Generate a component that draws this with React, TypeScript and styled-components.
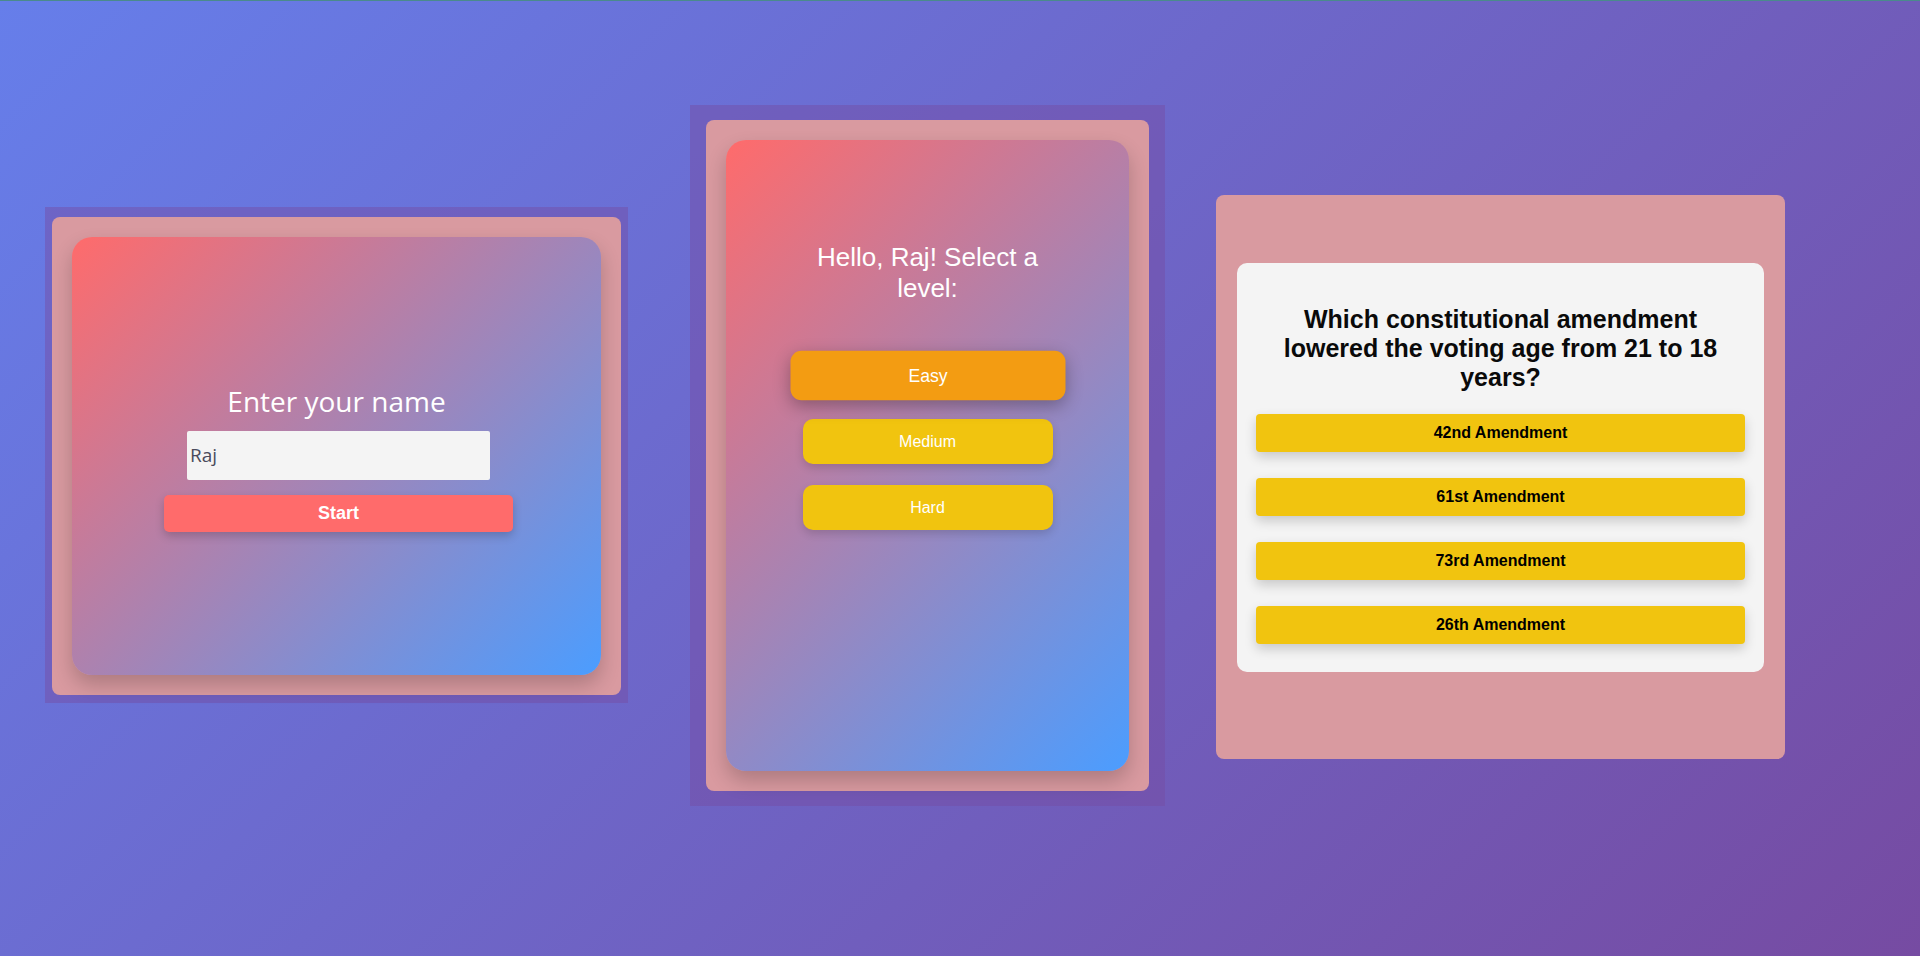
import React from "react";
import styled, { createGlobalStyle } from "styled-components";

const GlobalStyle = createGlobalStyle`
  html, body { margin: 0; padding: 0; }
  body { font-family: "Liberation Sans", Arial, sans-serif; }
  *, *::before, *::after { box-sizing: border-box; }
`;

const Page = styled.main`
  height: 956px;
  overflow: hidden;
  border-top: 1px solid #4a8a8c;
  background: linear-gradient(135deg, #667eea 0%, #764ba2 100%);
  display: flex;
  align-items: flex-start;
`;

const Screen = styled.section<{ $top: number; $left: number; $pad: string; $tint?: boolean }>`
  flex: none;
  margin-top: ${(p) => p.$top}px;
  margin-left: ${(p) => p.$left}px;
  padding: ${(p) => p.$pad};
  background: ${(p) => (p.$tint ? "rgba(118, 75, 162, 0.45)" : "transparent")};
`;

const Card = styled.div<{ $w: number; $h: number; $pad: string }>`
  width: ${(p) => p.$w}px;
  height: ${(p) => p.$h}px;
  padding: ${(p) => p.$pad};
  background: #d99aa0;
  border-radius: 8px;
  display: flex;
  flex-direction: column;
`;

const GradientPanel = styled.div<{ $center?: boolean; $padTop: number }>`
  flex: 1;
  border-radius: 20px;
  background: linear-gradient(135deg, #ff6b6b 0%, #4b9dff 100%);
  box-shadow: 0 10px 20px rgba(0, 0, 0, 0.2);
  display: flex;
  flex-direction: column;
  align-items: center;
  justify-content: ${(p) => (p.$center ? "center" : "flex-start")};
  padding-top: ${(p) => p.$padTop}px;
`;

const NameTitle = styled.h2`
  margin: 0 0 12px;
  font-family: "Segoe UI", "Open Sans", sans-serif;
  font-weight: 400;
  font-size: 28px;
  line-height: 33.6px;
  color: #ffffff;
`;

const NameInput = styled.input`
  margin-left: 4px;
  width: 303px;
  height: 49px;
  border: none;
  border-radius: 2px;
  background: #f4f4f4;
  padding: 0 3px;
  font-family: "Segoe UI", "Open Sans", sans-serif;
  font-size: 19px;
  color: #4a4b5c;
  outline: none;
`;

const StartButton = styled.button`
  margin: 15px 0 0 4px;
  width: 349px;
  height: 37px;
  border: none;
  border-radius: 5px;
  background: #ff6b6b;
  color: #ffffff;
  font-family: "Liberation Sans", Arial, sans-serif;
  font-weight: 700;
  font-size: 18px;
  box-shadow: 0 4px 10px rgba(0, 0, 0, 0.2);
`;

const LevelTitle = styled.h2`
  margin: 0 0 49px;
  max-width: 260px;
  text-align: center;
  font-weight: 400;
  font-size: 26px;
  line-height: 31px;
  color: #ffffff;
`;

const LevelList = styled.div`
  display: flex;
  flex-direction: column;
  align-items: center;
  gap: 21px;
`;

const LevelButton = styled.button<{ $active?: boolean }>`
  width: 250px;
  height: 45px;
  border: none;
  border-radius: 10px;
  background: ${(p) => (p.$active ? "#f39c12" : "#f1c40f")};
  color: #ffffff;
  font-family: "Liberation Sans", Arial, sans-serif;
  font-size: 16px;
  transform: ${(p) => (p.$active ? "scale(1.1)" : "none")};
  box-shadow: ${(p) =>
    p.$active ? "0 5px 15px rgba(0, 0, 0, 0.3)" : "0 4px 8px rgba(0, 0, 0, 0.15)"};
`;

const QuestionCard = styled.div`
  background: #f4f4f4;
  border-radius: 10px;
  padding: 20px 19px 28px;
  display: flex;
  flex-direction: column;
`;

const Question = styled.h2`
  margin: 22px 0 23px;
  text-align: center;
  font-weight: 700;
  font-size: 25px;
  line-height: 28.75px;
  color: #0a0a0a;
`;

const AnswerList = styled.div`
  display: flex;
  flex-direction: column;
  gap: 26px;
`;

const AnswerButton = styled.button`
  height: 38px;
  width: 100%;
  border: none;
  border-radius: 4px;
  background: #f1c40f;
  color: #000000;
  font-family: "Liberation Sans", Arial, sans-serif;
  font-weight: 700;
  font-size: 16px;
  box-shadow: 0 5px 12px rgba(0, 0, 0, 0.18);
`;

const levels = ["Easy", "Medium", "Hard"];
const answers = ["42nd Amendment", "61st Amendment", "73rd Amendment", "26th Amendment"];

export default function App() {
  return (
    <>
      <GlobalStyle />
      <Page>
        <Screen $top={206} $left={45} $pad="10px 7px 8px" $tint>
          <Card $w={569} $h={478} $pad="20px">
            <GradientPanel $center $padTop={5}>
              <NameTitle>Enter your name</NameTitle>
              <NameInput value="Raj" readOnly />
              <StartButton>Start</StartButton>
            </GradientPanel>
          </Card>
        </Screen>

        <Screen $top={104} $left={62} $pad="15px 16px" $tint>
          <Card $w={443} $h={671} $pad="20px">
            <GradientPanel $padTop={102}>
              <LevelTitle>Hello, Raj! Select a level:</LevelTitle>
              <LevelList>
                {levels.map((l, i) => (
                  <LevelButton key={l} $active={i === 0}>
                    {l}
                  </LevelButton>
                ))}
              </LevelList>
            </GradientPanel>
          </Card>
        </Screen>

        <Screen $top={194} $left={51} $pad="0">
          <Card $w={569} $h={564} $pad="68px 21px 87px">
            <QuestionCard>
              <Question>
                Which constitutional amendment lowered the voting age from 21 to 18 years?
              </Question>
              <AnswerList>
                {answers.map((a) => (
                  <AnswerButton key={a}>{a}</AnswerButton>
                ))}
              </AnswerList>
            </QuestionCard>
          </Card>
        </Screen>
      </Page>
    </>
  );
}
